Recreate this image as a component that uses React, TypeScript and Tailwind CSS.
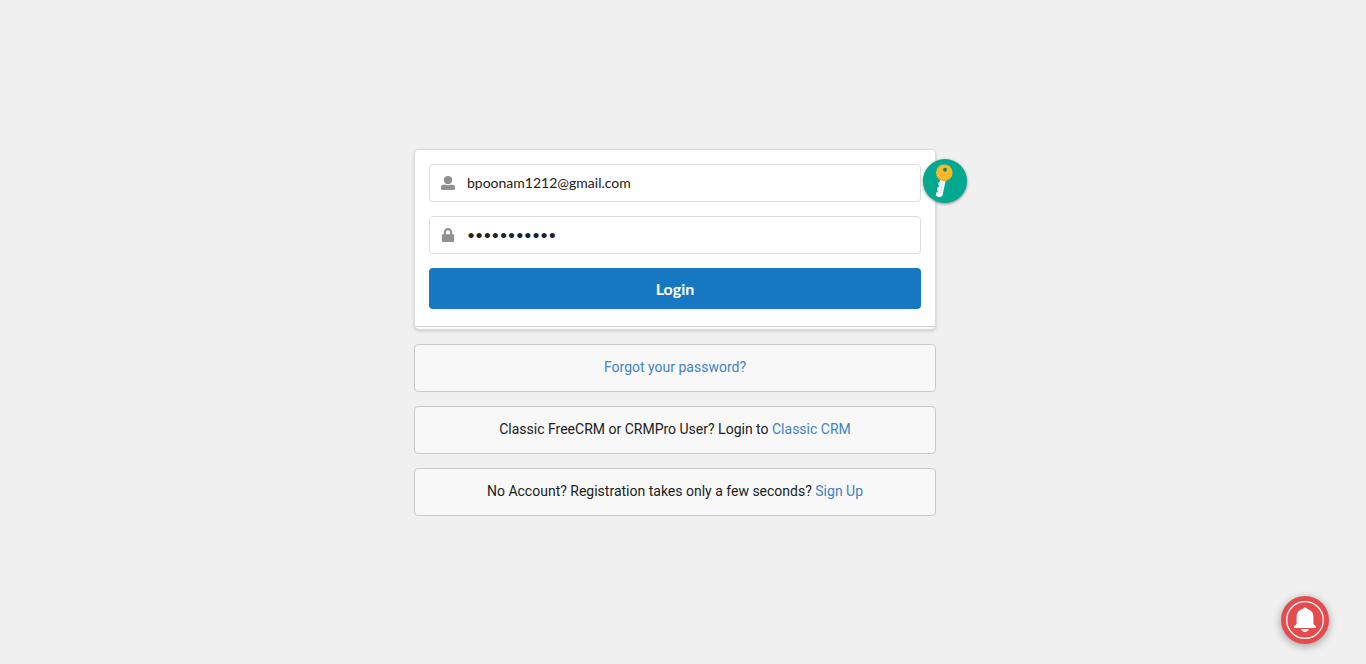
import type { ReactNode } from 'react';

function UserIcon() {
  return (
    <svg viewBox="0 0 14 14" className="h-3.5 w-3.5" fill="#909090" aria-hidden="true">
      <ellipse cx="7" cy="4" rx="4.3" ry="4.1" />
      <path d="M2.4 8.800h2.200c1.500.5 3.300.5 4.800 0h2.200c1.500 0 2.400 1 2.400 2.500v1.200c0 .9-.6 1.500-1.500 1.500h-11C.6 14 0 13.400 0 12.500v-1.200c0-1.500.9-2.500 2.400-2.500z" />
    </svg>
  );
}

function LockIcon() {
  return (
    <svg viewBox="0 0 448 512" className="h-3.5 w-3.5" fill="#909090" aria-hidden="true">
      <path d="M400 224h-24v-72C376 68.200 307.800 0 224 0S72 68.200 72 152v72H48c-26.500 0-48 21.500-48 48v192c0 26.500 21.500 48 48 48h352c26.500 0 48-21.500 48-48V272c0-26.500-21.500-48-48-48zm-104 0H152v-72c0-39.700 32.300-72 72-72s72 32.300 72 72v72z" />
    </svg>
  );
}

function KeyIcon() {
  return (
    <svg viewBox="0 0 44 44" className="h-11 w-11" aria-hidden="true">
      <path d="M16.500 20h6.500l-3.700 17.200-3.300 1-3.300-1.400.6-3 1.700-1.400-1-1.400.6-2.500 1.600-1.400-1-1.500.5-2.300 1.500-1.300z" fill="#fff" />
      <path d="M20.300 22l-3 13" stroke="#c4ded6" strokeWidth="0.8" />
      <circle cx="21.300" cy="13.700" r="8.300" fill="#fbb829" />
      <path d="M13.600 16.800a8.300 8.300 0 0 0 15.200.3 10 10 0 0 1-15.200-.3z" fill="#e9a71f" />
      <circle cx="22" cy="10.800" r="2" fill="#23845e" />
    </svg>
  );
}

function BellIcon() {
  return (
    <svg viewBox="0 0 48 48" className="h-12 w-12" aria-hidden="true">
      <circle cx="24" cy="24" r="18.300" fill="none" stroke="#fff" strokeWidth="1.300" />
      <path d="M24 11.600c-1.300 0-2.100.7-2.200 1.400-3.700.8-6.200 3.600-6.200 7.200v6.400c0 1.500-.4 2.100-1.500 2.900-.8.500-1.300.9-1.300 1.400 0 .7.500 1.100 1.400 1.100h19.600c.9 0 1.400-.4 1.400-1.100 0-.5-.5-.9-1.300-1.400-1.100-.8-1.500-1.400-1.500-2.900v-6.400c0-3.600-2.500-6.400-6.200-7.200-.1-.7-.9-1.400-2.200-1.400zM20.200 33h7.600c-.3 1.700-1.900 2.900-3.800 2.900s-3.500-1.200-3.800-2.900z" fill="#fff" />
    </svg>
  );
}

type FieldProps = { id: string; label: string; type: string; value: string; icon: ReactNode };

function Field({ id, label, type, value, icon }: FieldProps) {
  return (
    <div className="flex h-[38px] items-center rounded border border-[#dededf] bg-white">
      <label htmlFor={id} className="flex w-9 shrink-0 justify-center">
        {icon}
      </label>
      <input
        id={id}
        type={type}
        aria-label={label}
        defaultValue={value}
        autoComplete="off"
        className="h-full min-w-0 flex-1 bg-transparent pr-3.5 pb-0.5 pl-px text-sm text-[#212121] outline-none"
      />
    </div>
  );
}

function Message({ children }: { children: ReactNode }) {
  return (
    <div className="flex min-h-12 items-center justify-center rounded border border-[#c9caca] bg-[#f8f8f8] px-5 pb-0.5 text-center font-['Roboto',sans-serif] text-sm text-[#212121]">
      <p>{children}</p>
    </div>
  );
}

function TextLink({ children }: { children: ReactNode }) {
  return (
    <a href="#" className="text-[#4183c4]">
      {children}
    </a>
  );
}

export default function App() {
  return (
    <div className="flex min-h-screen items-center justify-center bg-[#f0f0f0] pt-px pr-4 font-['Lato',sans-serif]">
      <main className="flex w-full max-w-[522px] flex-col gap-3.5">
        <div className="relative p-px">
          <form
            className="rounded border-b-2 border-[#f8f8f8] bg-white shadow-[0_0_0_1px_#dedede,0_1px_3px_1px_#c4c4c4]"
            onSubmit={(event) => event.preventDefault()}
          >
            <div className="flex flex-col gap-3.5 border-b border-[#d4d4d5] px-3.5 pt-3.5 pb-[17px]">
              <Field id="email" label="E-mail address" type="text" value="bpoonam1212@gmail.com" icon={<UserIcon />} />
              <Field id="password" label="Password" type="password" value="password123" icon={<LockIcon />} />
              <button type="submit" className="h-[41px] rounded bg-[#1678c2] text-base font-bold text-white">
                Login
              </button>
            </div>
          </form>
          <button
            type="button"
            aria-label="Fill in saved password"
            className="absolute top-2.5 -right-[31px] h-11 w-11 rounded-full bg-[#00a98f] shadow-[0_1px_3px_rgba(0,0,0,0.45)]"
          >
            <KeyIcon />
          </button>
        </div>
        <Message>
          <TextLink>Forgot your password?</TextLink>
        </Message>
        <Message>
          Classic FreeCRM or CRMPro User? Login to <TextLink>Classic CRM</TextLink>
        </Message>
        <Message>
          No Account? Registration takes only a few seconds? <TextLink>Sign Up</TextLink>
        </Message>
      </main>
      <button
        type="button"
        aria-label="Notifications"
        className="fixed right-[37px] bottom-5 h-12 w-12 rounded-full bg-[#e54b4d] shadow-[0_2px_8px_rgba(0,0,0,0.35)]"
      >
        <BellIcon />
      </button>
    </div>
  );
}
